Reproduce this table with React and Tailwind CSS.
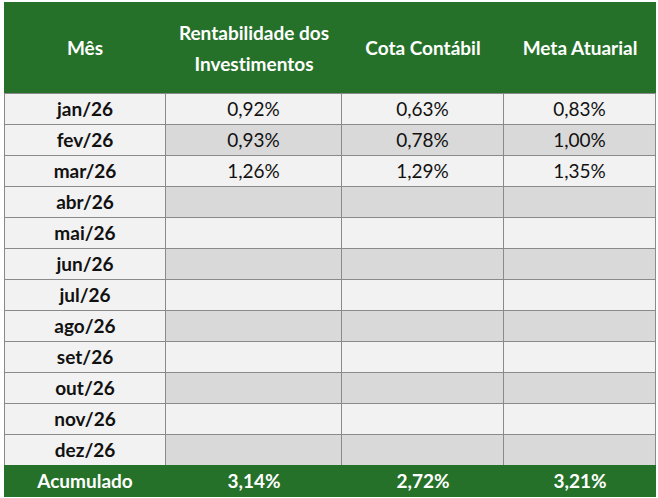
import React from "react";

const months = ["jan/26","fev/26","mar/26","abr/26","mai/26","jun/26","jul/26","ago/26","set/26","out/26","nov/26","dez/26"];
const data = [
  ["0,92%","0,63%","0,83%"],
  ["0,93%","0,78%","1,00%"],
  ["1,26%","1,29%","1,35%"],
];

export default function App() {
  return (
    <div className="w-[658px] h-[498px] bg-white pt-[2px] pl-[4px] [font-variant-ligatures:none]" style={{ fontFamily: "Lato, 'Open Sans', sans-serif" }}>
      <div className="w-[652px]">
        <div className="grid grid-cols-[162px_176px_162px_152px] h-[91px] bg-[#267129] text-white font-bold text-[19px] leading-[31px] text-center">
          <div className="flex items-center justify-center">Mês</div>
          <div className="flex items-center justify-center">Rentabilidade dos<br />Investimentos</div>
          <div className="flex items-center justify-center">Cota Contábil</div>
          <div className="flex items-center justify-center">Meta Atuarial</div>
        </div>
        {months.map((m, i) => {
          const alt = i % 2 === 1 ? "bg-[#d9d9d9]" : "bg-[#f2f2f2]";
          const vals = data[i] || ["", "", ""];
          return (
            <div key={m} className="grid grid-cols-[162px_176px_162px_152px] h-[31px] text-[19px] text-[#111] text-center">
              <div className="flex items-center justify-center border-t border-l border-r border-[#8a8a8a] bg-[#f2f2f2] font-bold">{m}</div>
              <div className={`flex items-center justify-center border-t border-r border-[#8a8a8a] ${alt}`}>{vals[0]}</div>
              <div className={`flex items-center justify-center border-t border-r border-[#8a8a8a] ${alt}`}>{vals[1]}</div>
              <div className={`flex items-center justify-center border-t border-r border-[#8a8a8a] ${alt}`}>{vals[2]}</div>
            </div>
          );
        })}
        <div className="grid grid-cols-[162px_176px_162px_152px] h-[32px] bg-[#267129] text-white font-bold text-[19px] text-center">
          <div className="flex items-center justify-center">Acumulado</div>
          <div className="flex items-center justify-center">3,14%</div>
          <div className="flex items-center justify-center">2,72%</div>
          <div className="flex items-center justify-center">3,21%</div>
        </div>
      </div>
    </div>
  );
}
